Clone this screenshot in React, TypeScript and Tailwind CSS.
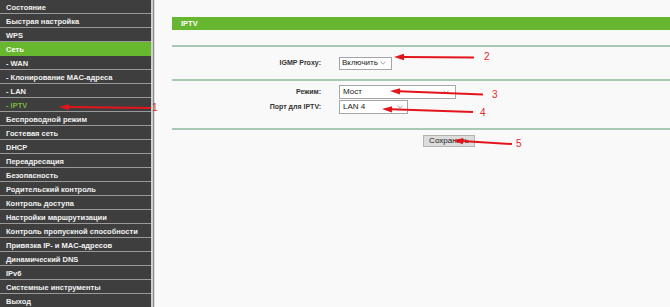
import React from "react";

type Item = { t: string; active?: boolean; current?: boolean };

const items: Item[] = [
  { t: "Состояние" },
  { t: "Быстрая настройка" },
  { t: "WPS" },
  { t: "Сеть", active: true },
  { t: "- WAN" },
  { t: "- Клонирование MAC-адреса" },
  { t: "- LAN" },
  { t: "- IPTV", current: true },
  { t: "Беспроводной режим" },
  { t: "Гостевая сеть" },
  { t: "DHCP" },
  { t: "Переадресация" },
  { t: "Безопасность" },
  { t: "Родительский контроль" },
  { t: "Контроль доступа" },
  { t: "Настройки маршрутизации" },
  { t: "Контроль пропускной способности" },
  { t: "Привязка IP- и MAC-адресов" },
  { t: "Динамический DNS" },
  { t: "IPv6" },
  { t: "Системные инструменты" },
  { t: "Выход" },
];

function Chevron() {
  return (
    <svg width="6" height="4" viewBox="0 0 6 4" className="shrink-0">
      <path d="M0.5 0.8 L3 3.2 L5.5 0.8" fill="none" stroke="#8a8a8a" strokeWidth="0.8" />
    </svg>
  );
}

function Arrow({
  tip,
  tail,
  label,
  lx,
  ly,
}: {
  tip: [number, number];
  tail: [number, number];
  label: string;
  lx: number;
  ly: number;
}) {
  const dx = tail[0] - tip[0];
  const dy = tail[1] - tip[1];
  const len = Math.sqrt(dx * dx + dy * dy);
  const ux = dx / len;
  const uy = dy / len;
  const hl = 10;
  const hw = 3.2;
  const bx = tip[0] + ux * hl;
  const by = tip[1] + uy * hl;
  const p1 = `${bx - uy * hw},${by + ux * hw}`;
  const p2 = `${bx + uy * hw},${by - ux * hw}`;
  return (
    <g>
      <line x1={bx - ux * 1} y1={by - uy * 1} x2={tail[0]} y2={tail[1]} stroke="#e3151b" strokeWidth="2" />
      <polygon points={`${tip[0]},${tip[1]} ${p1} ${p2}`} fill="#e3151b" />
      <text
        x={lx}
        y={ly + 3.6}
        fill="#e3262b"
        fontSize="10"
        fontFamily="'Liberation Sans', Arial, sans-serif"
      >
        {label}
      </text>
    </g>
  );
}

export default function App() {
  return (
    <div
      className="relative w-[670px] h-[307px] overflow-hidden bg-[#f9f9f9] flex"
      style={{ fontFamily: "'Liberation Sans', Arial, sans-serif" }}
    >
      {/* Sidebar */}
      <div className="w-[151px] shrink-0 flex flex-col bg-[#3e3e3e]">
        {items.map((it) => (
          <div
            key={it.t}
            className={`h-[14px] shrink-0 border-b border-[#9a9a9a] flex items-center pl-[6px] pt-[2px] text-[7.5px] font-bold leading-none whitespace-nowrap ${
              it.active
                ? "bg-[#68b82f] text-white border-[#68b82f]"
                : it.current
                ? "bg-[#3e3e3e] text-[#78b83c]"
                : "bg-[#3e3e3e] text-[#f2f2f2]"
            }`}
          >
            {it.t}
          </div>
        ))}
      </div>
      <div className="w-[2px] shrink-0 bg-[#cfcfcf]" />
      <div className="w-[1px] shrink-0 bg-[#8a8a8a]" />
      <div className="w-[1px] shrink-0 bg-[#dedede]" />

      {/* Main */}
      <div className="flex-1 pl-[17px] pt-[17px] flex flex-col">
        <div className="h-[13px] bg-[#66b72f] flex items-center pl-[9px] text-[7.5px] font-bold text-white leading-none">
          IPTV
        </div>
        <div className="h-[15px]" />
        <div className="h-[2px] bg-[#a9c8b4]" />

        <div className="h-[32px] flex items-center">
          <div className="w-[149px] text-right text-[7px] font-bold text-[#333]">IGMP Proxy:</div>
          <div className="ml-[18px]">
            <div className="w-[53px] h-[13px] bg-white border border-[#a6a6a6] flex items-center justify-between pl-[2px] pr-[5px] text-[8px] leading-none text-[#222]">
              <span>Включить</span>
              <Chevron />
            </div>
          </div>
        </div>

        <div className="h-[2px] bg-[#a9c8b4]" />

        <div className="pt-[4px] h-[47px] flex flex-col gap-[1px]">
          <div className="flex items-center">
            <div className="w-[149px] text-right text-[7px] font-bold text-[#333]">Режим:</div>
            <div className="ml-[18px]">
              <div className="w-[117px] h-[14px] bg-white border border-[#a6a6a6] flex items-center justify-between pl-[3px] pr-[6px] text-[8px] leading-none text-[#222]">
                <span>Мост</span>
                <Chevron />
              </div>
            </div>
          </div>
          <div className="flex items-center">
            <div className="w-[149px] text-right text-[7px] font-bold text-[#333]">Порт для IPTV:</div>
            <div className="ml-[18px]">
              <div className="w-[69px] h-[14px] bg-white border border-[#a6a6a6] flex items-center justify-between pl-[3px] pr-[4px] text-[8px] leading-none text-[#222]">
                <span>LAN 4</span>
                <Chevron />
              </div>
            </div>
          </div>
        </div>

        <div className="h-[2px] bg-[#a9c8b4]" />

        <div className="pt-[5px] flex">
          <div className="ml-[251px] w-[52px] h-[12px] bg-[#dcdcdc] border border-[#b4b4b4] flex items-center justify-center text-[8px] leading-none text-[#222]">
            Сохранить
          </div>
        </div>
      </div>

      {/* Annotations */}
      <svg className="absolute inset-0 pointer-events-none" width="670" height="307" viewBox="0 0 670 307">
        <Arrow tip={[59, 107]} tail={[151, 108]} label="1" lx={152} ly={107} />
        <Arrow tip={[394, 57]} tail={[474, 57.5]} label="2" lx={484} ly={56.5} />
        <Arrow tip={[390, 91]} tail={[483, 94.5]} label="3" lx={492} ly={94} />
        <Arrow tip={[382, 109]} tail={[473, 112]} label="4" lx={480} ly={112} />
        <Arrow tip={[453, 140.5]} tail={[512, 144]} label="5" lx={516} ly={143} />
      </svg>
    </div>
  );
}
